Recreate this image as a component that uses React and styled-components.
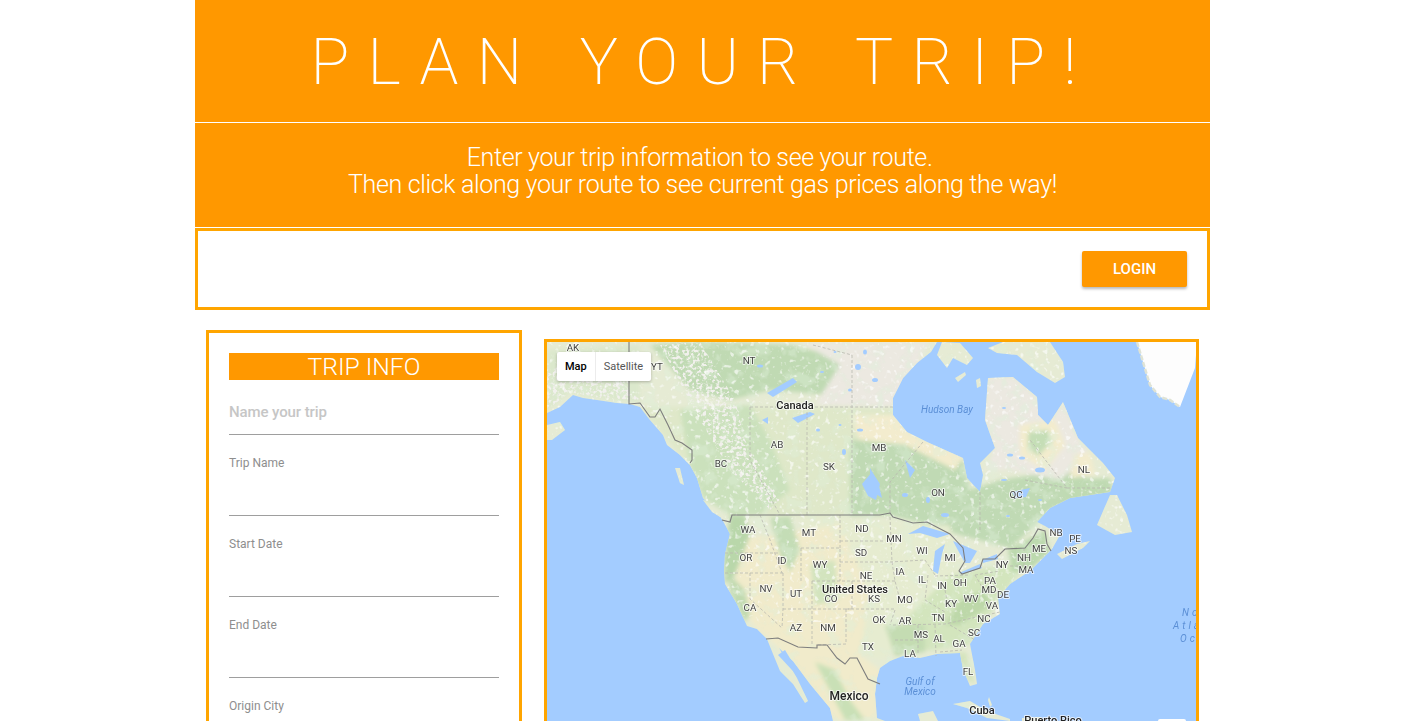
import React from "react";
import styled, { createGlobalStyle } from "styled-components";

const Global = createGlobalStyle`
  html, body { margin: 0; padding: 0; background: #fff; overflow: hidden; }
  body { font-family: Roboto, "Liberation Sans", sans-serif; }
`;
const Page = styled.div`
  width: 1015px; height: 721px; margin-left: 195px; overflow: hidden;
`;
const Banner = styled.header`
  background: #ff9800; color: #fff; text-align: center; height: 122px; margin-bottom: 1px;
  display: flex; align-items: center; justify-content: center;
`;
const Title = styled.h1`
  margin: 3px 0 0; font-weight: 200; font-size: 64px; letter-spacing: 18.2px; word-spacing: 6px; line-height: 116px; white-space: nowrap;
`;
const Intro = styled.div`
  background: #ff9800; color: #fff; text-align: center; height: 104px; box-sizing: border-box;
  padding-top: 21px; font-weight: 300; font-size: 25px; letter-spacing: -.35px; line-height: 27px; margin-bottom: 1px;
`;
const Nav = styled.nav`
  height: 82px; box-sizing: border-box; border: 3px solid #ffa500; display: flex; align-items: center;
  justify-content: flex-end; padding: 0 20px 0 0; margin-top: 1px;
`;
const LoginButton = styled.button`
  width: 105px; height: 36px; background: #ff9800; color: #fff; border: 0; border-radius: 2px;
  font: 500 15px Roboto, sans-serif; text-transform: uppercase; box-shadow: 0 2px 3px rgba(0,0,0,.28);
`;
const Content = styled.main`
  display: flex; gap: 22px; align-items: flex-start; padding: 20px 0 0 11px;
`;
const Card = styled.section`
  width: 316px; box-sizing: border-box; border: 3px solid #ffa500; padding: 20px; flex: none;
`;
const CardTitle = styled.h2`
  margin: 0 0 17px; background: #ff9800; color: #fff; font-weight: 300; font-size: 24.7px; line-height: 27px; height: 27px; text-align: center;
`;
const NameInput = styled.div`
  height: 37px; border-bottom: 1px solid #9e9e9e; color: #c6c6c6; font-size: 15px; font-weight: 500; letter-spacing: -.1px; line-height: 30px;
`;
const Field = styled.div`
  height: 59px; border-bottom: 1px solid #9e9e9e; color: #8e8e8e; font-size: 12px; line-height: 14px; padding-top: 21px;
`;
const MapFrame = styled.div`
  position: relative; margin-top: 9px; width: 655px; height: 500px; box-sizing: border-box; border: 3px solid #ffa500; background: #a3ccff; overflow: hidden; flex: none;
`;
const MapArt = styled.svg`
  display: block; width: 649px; height: 379px;
`;
const MapType = styled.div`
  position: absolute; left: 10px; top: 10px; display: flex; height: 29px; background: #fff; border-radius: 2px;
  box-shadow: 0 1px 3px rgba(0,0,0,.25); font-size: 11px; line-height: 29px;
`;
const MapTab = styled.div`
  padding: 0 8px; color: ${p => (p.$on ? "#000" : "#555")}; font-weight: ${p => (p.$on ? 500 : 400)};
  border-right: ${p => (p.$on ? "1px solid #ececec" : "0")};
`;
const ZoomStub = styled.div`
  position: absolute; left: 611px; top: 377px; width: 28px; height: 28px; background: #fff; border-radius: 2px;
`;
const LabelLayer = styled.g`
  opacity: .99;
`;
const Label = styled.text`
  font-family: Roboto, sans-serif; font-size: ${p => p.$size || 9.8}px; font-weight: ${p => p.$w || 400};
  fill: ${p => p.$c || "#3f3f3f"}; text-anchor: middle; paint-order: stroke; stroke: rgba(255,255,255,.7); stroke-width: 2px; stroke-linejoin: round;
`;
const SeaLabel = styled.text`
  font-family: Roboto, sans-serif; font-size: ${p => p.$size || 10}px; font-style: italic; fill: #5b8fd6;
  text-anchor: ${p => p.$a || "middle"}; letter-spacing: ${p => p.$ls || 0}px;
`;

const land = "547,342 937,342 931,352 917,363 903,378 893,398 893,415 907,432 927,442 963,458 967,478 980,492 983,475 980,463 995,448 985,420 988,378 1013,377 1037,397 1038,415 1048,425 1063,402 1078,438 1103,463 1115,478 1110,492 1070,498 1050,508 1037,522 1045,526 1060,535 1052,549 1047,554 1030,571 1010,584 998,598 1000,614 983,624 970,644 975,670 977,684 970,686 963,669 960,653 937,654 920,658 903,656 890,661 880,668 877,678 875,694 877,718 885,721 833,721 830,708 810,684 793,661 779,648 797,678 808,701 805,703 793,684 780,671 773,654 767,639 757,629 747,626 737,604 725,584 724,571 725,554 730,534 723,521 717,512 703,498 697,478 690,465 680,455 667,445 663,435 650,420 640,407 630,404 617,403 597,400 583,398 573,395 560,407 547,413";
const islands = [
  "703,500 715,503 730,518 725,520 712,512",
  "675,468 680,468 684,485 680,483",
  "547,425 560,422 565,430 552,440 547,440",
  "1097,525 1110,495 1117,495 1127,515 1132,532 1115,535",
  "1057,554 1077,544 1090,541 1083,548 1062,559",
  "988,348 1003,342 1050,342 1063,362 1065,377 1055,383 1037,372 1017,355 997,353",
  "942,342 960,343 973,358 967,365 953,358 947,368 937,355",
  "955,378 965,372 966,375 958,382",
  "976,380 980,378 981,386 977,388",
  "953,704 970,701 987,711 1010,719 1010,721 987,718 967,708",
  "918,714 933,711 938,721 920,721",
  "1022,718 1040,717 1045,721 1022,721",
  "988,700 989,697 992,705 990,707",
];
const greens = [
  { c: "#dfe8c9", p: "640,407 893,407 893,425 905,435 927,445 963,460 960,520 880,516 732,516 703,498 680,455" },
  { c: "#c0dab4", p: "850,440 925,445 963,460 970,490 1000,480 1065,470 1110,485 1108,495 1050,510 1030,530 1010,548 960,535 930,525 890,515 850,516" },
  { c: "#cbe1bc", p: "680,410 750,405 770,440 790,490 760,515 732,516 703,498 690,465" },
  { c: "#c0dab3", p: "650,345 700,342 790,345 850,360 830,395 770,390 730,400 690,390" },
  { c: "#dbe8cc", p: "547,350 640,345 640,403 600,398 570,392 547,410" },
  { c: "#ece9e1", p: "800,342 931,342 893,400 893,407 815,405 840,365" },
  { c: "#f3ecce", p: "850,415 893,415 907,432 963,458 955,470 905,445 860,440" },
  { c: "#ece9e1", p: "988,378 1013,377 1037,397 1048,425 1063,402 1078,438 1090,455 1060,480 1010,470 985,470 995,448 985,420" },
  { c: "#f3ecce", p: "1020,425 1055,420 1065,445 1045,470 1020,455" },
  { c: "#c5deb6", p: "1028,432 1048,430 1052,442 1038,456 1028,448" },
  { c: "#f3ecce", p: "1075,455 1090,452 1095,475 1070,478" },
  { c: "#bfdab2", p: "1065,480 1110,478 1113,492 1065,498" },
  { c: "#e6ecd0", p: "800,516 950,525 960,570 930,600 900,650 880,660 850,650 840,600 810,570" },
  { c: "#f1ebcb", p: "735,540 840,525 870,590 860,655 880,670 875,720 835,720 810,684 779,648 757,629 737,604 735,570" },
  { c: "#b9d7aa", p: "730,516 745,516 750,535 735,575 725,584 724,555" },
  { c: "#c4ddb6", p: "770,518 790,516 800,550 790,572 780,555" },
  { c: "#d3e4be", p: "810,565 835,560 838,600 815,605" },
  { c: "#c1dab0", p: "730,575 745,590 750,615 745,622 730,595" },
  { c: "#d3e5bd", p: "950,575 1030,560 1010,585 998,600 985,622 968,645 930,650 895,650 905,620" },
  { c: "#bdd8a9", p: "960,600 985,590 992,605 960,625 945,625" },
  { c: "#bcd9ae", p: "1008,550 1045,530 1050,552 1030,570 1012,572" },
  { c: "#c4dcb2", p: "885,625 925,625 925,652 895,656" },
  { c: "#c9e0b6", p: "815,662 835,670 850,700 865,720 845,720" },
  { c: "#d5e4bd", p: "940,654 966,652 975,684 968,680" },
];
const rocky = [
  "660,345 700,342 735,400 745,440 780,500 770,510 730,470 700,420",
  "547,370 600,360 640,400 600,398 570,392 547,410",
];
const lakes = [
  "908,534 923,526 950,534 937,538 920,533",
  "933,571 935,551 945,544 942,554 938,574",
  "953,541 977,551 970,563 965,563 960,554",
  "959,573 980,564 982,568 962,574",
  "982,560 997,554 998,559 983,563",
  "870,468 878,482 882,498 873,492 870,478",
  "767,393 793,378 797,382 773,397",
  "792,418 810,412 815,414 798,423",
  "762,420 768,417 768,424",
  "862,484 872,472 880,484 876,500 868,496",
  "1012,492 1030,488 1026,497 1015,498",
  "905,460 915,470 910,478",
  "778,655 785,650 800,675 792,670",
];
const ponds = [
  [760,366,3,1.5],[858,367,3,3],[865,352,2,2.5],[850,390,2,1.5],[875,380,3,2],[835,352,1.5,1],[822,372,2,1],
  [818,430,2,1.5],[844,452,2,3],[840,425,1.5,1],[860,430,3,1.5],[905,495,3,2],[928,500,2,3],[945,515,4,2],
  [1004,408,2,1],[1010,455,3,1.5],[1022,458,3,1.5],[1040,470,5,2.5],[1004,480,3,1],[1040,500,2,1],[1008,516,2,1],
];
const borders = [
  "629,342 629,404 640,403 650,417 655,417 660,409 668,425 675,440 682,443 692,450 692,460 690,463",
  "722,520 730,522 732,515 880,515 890,513 893,517 913,523 927,522 950,534 963,548 965,561 959,571 962,574 980,568 983,559 995,559 1005,549 1025,548 1033,538 1038,529 1045,531 1047,544 1051,551",
  "766,639 778,638 798,647 817,648 817,645 827,645 837,658 845,664 850,658 857,658 868,679 880,684",
];
const dashes = [
  "750,407 893,407", "750,407 750,460 780,515", "807,407 807,515", "852,355 852,515", "813,345 852,355",
  "923,442 890,482 890,513", "980,492 980,532", "1067,488 1110,488", "1025,480 1067,488 1030,440",
  "725,573 783,573", "750,573 750,599 782,628", "783,573 783,609 782,628", "783,609 852,609", "812,581 812,644",
  "812,581 852,581 852,609", "846,609 846,644 817,645", "801,548 840,548 840,581", "801,548 801,581", "840,541 885,541",
  "840,515 840,548", "840,562 890,562", "852,581 895,581", "846,609 895,609", "895,610 890,625", "893,625 945,624 1000,612",
  "760,515 770,540 782,573", "725,553 780,553", "890,517 892,562 895,581 900,600", "890,562 925,560", "925,560 935,575",
  "935,576 970,575", "928,575 925,600 945,612", "945,590 948,606", "975,575 1000,571", "975,575 985,592 1000,590", "1024,548 1024,566", "1010,566 1030,566",
  "918,625 918,655", "935,625 936,656", "895,640 925,640", "940,652 962,650", "950,625 975,640",
];
const labels = [
  ["AK",573,351],["YT",657,370],["NT",749,364],["AB",777,448],["BC",721,467],["SK",829,470],["MB",879,451],["ON",938,496],["QC",1016,498],["NL",1084,473],
  ["NB",1056,536],["PE",1075,542],["NS",1071,554],["WA",748,533],["MT",809,536],["ND",862,532],["MN",894,542],["WI",922,554],["MI",950,561],["SD",861,556],
  ["WY",820,568],["ID",782,564],["OR",746,561],["NE",866,579],["IA",900,575],["IL",922,583],["IN",942,589],["OH",960,586],["NY",1002,568],["PA",990,584],
  ["NH",1024,561],["ME",1039,552],["MA",1026,573],["MD",989,593],["DE",1003,598],["WV",971,602],["VA",992,609],["KY",951,607],["MO",905,603],["KS",874,602],
  ["CO",831,602],["UT",796,597],["NV",766,592],["CA",750,611],["AZ",796,631],["NM",828,631],["TX",868,650],["OK",879,623],["AR",905,624],["TN",938,621],
  ["NC",984,622],["SC",974,636],["MS",921,638],["AL",939,642],["GA",959,647],["LA",910,657],["FL",968,675],
];
const bigLabels = [["Canada",795,409],["United States",855,593],["Mexico",849,700],["Cuba",982,714],["Puerto Rico",1053,724]];
const fields = ["Trip Name", "Start Date", "End Date", "Origin City"];

function TripMap() {
  return (
    <MapArt viewBox="547 342 649 379" aria-label="Map of North America">
      <defs>
        <clipPath id="landClip">
          <polygon points={land} />
          {islands.map(p => <polygon key={p} points={p} />)}
        </clipPath>
        <clipPath id="rockyClip">
          {rocky.map(p => <polygon key={p} points={p} />)}
        </clipPath>
        <filter id="soft" x="-10%" y="-10%" width="120%" height="120%"><feGaussianBlur stdDeviation="2" /></filter>
        <filter id="specks" x="0" y="0" width="100%" height="100%">
          <feTurbulence type="fractalNoise" baseFrequency="0.2" numOctaves="2" seed="7" />
          <feColorMatrix type="matrix" values="0 0 0 0 1  0 0 0 0 1  0 0 0 0 1  4 4 0 0 -4.5" />
        </filter>
        <filter id="rock" x="0" y="0" width="100%" height="100%">
          <feTurbulence type="fractalNoise" baseFrequency="0.3" numOctaves="2" seed="3" />
          <feColorMatrix type="matrix" values="0 0 0 0 .88  0 0 0 0 .87  0 0 0 0 .84  4 4 0 0 -3.9" />
        </filter>
        <filter id="patches" x="0" y="0" width="100%" height="100%">
          <feTurbulence type="fractalNoise" baseFrequency="0.07" numOctaves="3" seed="21" />
          <feColorMatrix type="matrix" values="0 0 0 0 .74  0 0 0 0 .86  0 0 0 0 .70  0 4 4 0 -4.1" />
        </filter>
      </defs>
      <rect x="547" y="342" width="649" height="379" fill="#a3ccff" />
      <polygon points="1137,342 1197,342 1195,368 1180,407 1170,400 1160,397 1150,385 1143,362" fill="#fdfdfd" />
      <polyline points="1137,342 1143,362 1150,385 1160,397 1170,400 1180,407" fill="none" stroke="#dfe3d5" strokeWidth="2.5" strokeDasharray="5 2" />
      <g clipPath="url(#landClip)">
        <rect x="547" y="342" width="649" height="379" fill="#e6ebd4" />
        <g filter="url(#soft)">
          {greens.map(g => <polygon key={g.p} points={g.p} fill={g.c} />)}
        </g>
        <rect x="547" y="342" width="560" height="379" filter="url(#patches)" opacity=".4" />
        <g clipPath="url(#rockyClip)">
          <rect x="547" y="342" width="260" height="200" filter="url(#rock)" />
        </g>
        <rect x="547" y="342" width="649" height="280" filter="url(#specks)" opacity=".6" />
      </g>
      {lakes.map(p => <polygon key={p} points={p} fill="#a3ccff" />)}
      {ponds.map(([x, y, rx, ry]) => <ellipse key={`${x}-${y}`} cx={x} cy={y} rx={rx} ry={ry} fill="#a3ccff" />)}
      {dashes.map(p => <polyline key={p} points={p} fill="none" stroke="#b9b9b0" strokeWidth=".8" strokeDasharray="3 2" />)}
      {borders.map(p => <polyline key={p} points={p} fill="none" stroke="#7d7d7d" strokeWidth="1.1" />)}
      <LabelLayer>
        {labels.map(([t, x, y]) => <Label key={t} x={x} y={y}>{t}</Label>)}
        {bigLabels.map(([t, x, y]) => <Label key={t} x={x} y={y} $size={t === "Mexico" ? 12 : 11} $w={500} $c="#222">{t}</Label>)}
        <SeaLabel x="947" y="413">Hudson Bay</SeaLabel>
        <SeaLabel x="920" y="685">Gulf of</SeaLabel>
        <SeaLabel x="920" y="695">Mexico</SeaLabel>
        <SeaLabel x="1182" y="616" $a="start" $ls={3}>North</SeaLabel>
        <SeaLabel x="1173" y="629" $a="start" $ls={3}>Atlantic</SeaLabel>
        <SeaLabel x="1180" y="642" $a="start" $ls={3}>Ocean</SeaLabel>
      </LabelLayer>
    </MapArt>
  );
}

export default function App() {
  return (
    <Page>
      <Global />
      <Banner><Title>PLAN YOUR TRIP!</Title></Banner>
      <Intro>Enter your trip information to see your route.{"\u00a0"}<br />Then click along your route to see current gas prices along the way!</Intro>
      <Nav><LoginButton>Login</LoginButton></Nav>
      <Content>
        <Card>
          <CardTitle>TRIP INFO</CardTitle>
          <NameInput>Name your trip</NameInput>
          {fields.map(f => <Field key={f}>{f}</Field>)}
        </Card>
        <MapFrame>
          <TripMap />
          <MapType>
            <MapTab $on>Map</MapTab>
            <MapTab>Satellite</MapTab>
          </MapType>
          <ZoomStub />
        </MapFrame>
      </Content>
    </Page>
  );
}
